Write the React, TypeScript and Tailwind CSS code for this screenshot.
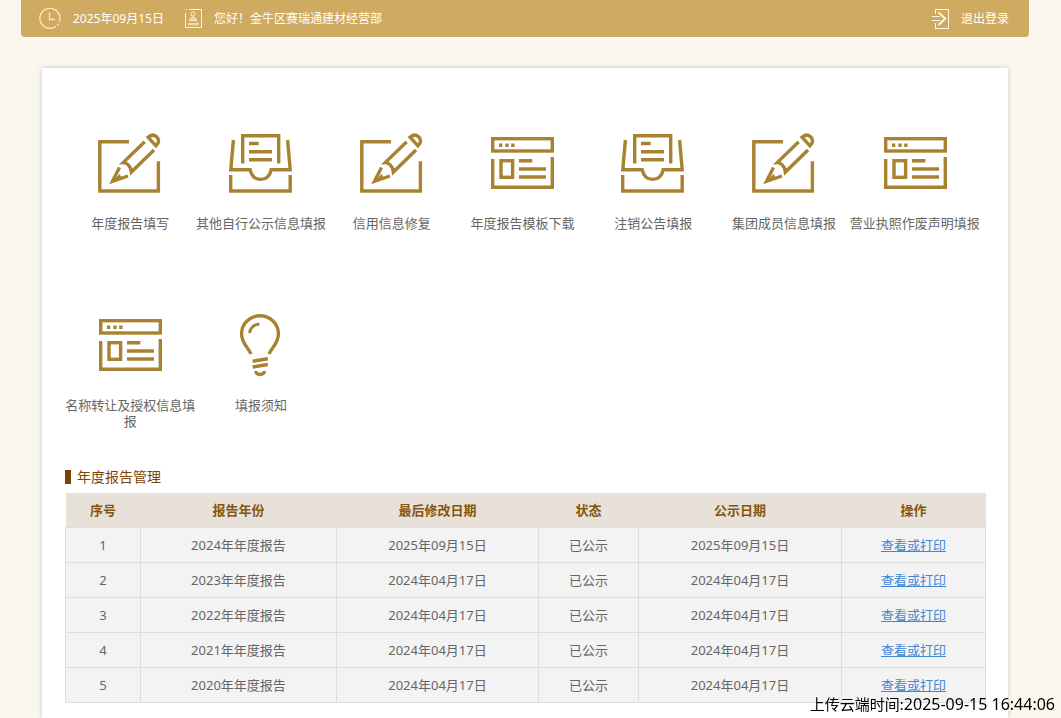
import type { ComponentType } from "react";

function ClockIcon() {
  return (
    <svg className="w-[22px] h-[22px] shrink-0" viewBox="0 0 22 22" fill="none" stroke="#fbe9c6" strokeWidth={1.3}>
      <path d="M17 18.2A10 10 0 1 1 20.2 14" />
      <path d="M18.2 17.2a10 10 0 0 0 1.2-1.6" />
      <path d="M10.5 4.5v7H16" />
    </svg>
  );
}

function BadgeIcon() {
  return (
    <svg className="w-[17px] h-[19px] shrink-0" viewBox="0 0 17 19" fill="none" stroke="#fdf0d6">
      <path d="M.5 4V18.5H16.5V.5H4M.5 .5H2" />
      <circle cx="8" cy="5" r="2.1" />
      <path d="M4.7 11.5C4.7 9 6 8.2 8 8.2s3.4 .8 3.4 3.3z" fill="#e8cf9f" />
      <path d="M3 15h11" strokeWidth={2.6} stroke="#efdab0" />
    </svg>
  );
}

function LogoutIcon() {
  return (
    <svg className="w-[17px] h-[20px] shrink-0" viewBox="0 0 17 20" fill="none" stroke="#fff8e8">
      <path d="M3.5 5V.5H16.5V19.5H3.5V14" />
      <path d="M0 7.5h8M0 11.5h8" />
      <path d="M6.5 3.5l6.8 6L6.5 16" strokeWidth={1.8} />
    </svg>
  );
}

function EditIcon() {
  return (
    <svg className="w-16 h-16" viewBox="0 0 64 64" fill="none" stroke="#a98231" strokeWidth={3.4}>
      <path d="M31 9.8H1.8V59H60.4V29.3" />
      <path d="M46.7 9.8L25.2 30.6C29 30.5 32.8 34.5 33.4 40L56 18" />
      <path d="M21.5 35.5L14.5 49.3L30 44" />
      <path d="M21.5 42L13.2 51L24.5 47Z" fill="#a98231" stroke="none" />
      <path d="M50 5.2L58 13.8C61.2 11 61.3 7.6 58.8 5C56.2 2.6 53 2.6 50 5.2Z" />
    </svg>
  );
}

function TrayIcon() {
  return (
    <svg className="w-16 h-16" viewBox="0 0 64 64" fill="none" stroke="#a98231" strokeWidth={3.4}>
      <path d="M13.7 31.5V3.8H49.7V31.5" />
      <path d="M20 11.5H29.7M20 19.7H43M20 27.7H43" />
      <path d="M4.4 8L1.8 37.8H21.2C22.6 44 26 47.4 31.7 47.4S40.8 44 42.2 37.8H61.2L58.6 8" />
      <path d="M1.7 43V59H61.2V43" />
    </svg>
  );
}

function WindowIcon() {
  return (
    <svg className="w-16 h-16" viewBox="0 0 64 64" fill="none" stroke="#a98231" strokeWidth={3.4}>
      <rect x="2.7" y="6.7" width="59.6" height="12.3" />
      <path d="M9 13.3h3.3M15.4 13.3h3.3M21.2 13.3h3.3" />
      <path d="M2.7 27V55.3H62.3V25" />
      <rect x="11" y="28.7" width="11.6" height="16.6" />
      <path d="M29 28.7H42.3M29 37H56M29 45H56" />
    </svg>
  );
}

function BulbIcon() {
  return (
    <svg className="w-16 h-16" viewBox="0 0 64 64" fill="none" stroke="#a98231" strokeWidth={3.4}>
      <path d="M22 40C19.5 33.5 12.6 30 12.6 19.8A18.4 18 0 0 1 49.4 19.8C49.4 30 42.5 33.5 40 40" />
      <path d="M20.5 19C21 14 25 10.3 30.5 10" strokeWidth={3} />
      <path d="M23.6 47.2L38.8 44.8M23.6 53L38.8 50.5" />
      <path d="M26.8 57C27 60 29 60.5 31 60.5S35.2 60 35.4 57" />
    </svg>
  );
}

const menus: { label: string; icon: ComponentType }[] = [
  { label: "年度报告填写", icon: EditIcon },
  { label: "其他自行公示信息填报", icon: TrayIcon },
  { label: "信用信息修复", icon: EditIcon },
  { label: "年度报告模板下载", icon: WindowIcon },
  { label: "注销公告填报", icon: TrayIcon },
  { label: "集团成员信息填报", icon: EditIcon },
  { label: "营业执照作废声明填报", icon: WindowIcon },
  { label: "名称转让及授权信息填报", icon: WindowIcon },
  { label: "填报须知", icon: BulbIcon },
];

const columns = [
  { title: "序号", width: "w-[75px]" },
  { title: "报告年份", width: "w-[196px]" },
  { title: "最后修改日期", width: "w-[202px]" },
  { title: "状态", width: "w-[100px]" },
  { title: "公示日期", width: "w-[203px]" },
  { title: "操作", width: "w-[144px]" },
];

const reports = [
  { year: 2024, modified: "2025年09月15日", published: "2025年09月15日" },
  { year: 2023, modified: "2024年04月17日", published: "2024年04月17日" },
  { year: 2022, modified: "2024年04月17日", published: "2024年04月17日" },
  { year: 2021, modified: "2024年04月17日", published: "2024年04月17日" },
  { year: 2020, modified: "2024年04月17日", published: "2024年04月17日" },
];

const cell = "border border-[#dedede] p-0 text-center";

export default function App() {
  return (
    <div className="min-h-screen flex flex-col pr-[11px] bg-[#faf7ee] font-['Noto_Sans','Noto_Sans_CJK_SC',sans-serif] text-[13px] leading-4 text-[#666]">
      <div className="w-[96%] mx-auto flex-1 flex flex-col">
        {/* Top bar */}
        <header className="h-[37px] shrink-0 flex items-center justify-between pl-[18px] pr-5 bg-[#cfaa61] rounded-b text-xs text-white">
          <div className="flex items-center gap-[21px]">
            <div className="flex items-center gap-3">
              <ClockIcon />
              <span>2025年09月15日</span>
            </div>
            <div className="flex items-center gap-3">
              <BadgeIcon />
              <span>您好！金牛区赛瑞通建材经营部</span>
            </div>
          </div>
          <a href="#logout" className="flex items-center gap-3">
            <LogoutIcon />
            退出登录
          </a>
        </header>

        <main className="flex-1 mt-[31px] mx-[21px] px-[23px] pt-16 bg-white shadow-[0_0_5px_rgba(0,0,0,0.2)]">
          {/* Menu */}
          <nav className="grid grid-cols-7 gap-y-[83px] pr-[5px]">
            {menus.map(({ label, icon: Icon }) => (
              <a key={label} href="#menu" className="flex flex-col items-center gap-[19px] text-center">
                <Icon />
                <span>{label}</span>
              </a>
            ))}
          </nav>

          {/* Annual reports */}
          <h2 className="flex items-center gap-1.5 mt-10 mb-2 text-sm leading-4 text-[#7b4406]">
            <span className="w-1.5 h-3.5 bg-[#7b4406]" />
            年度报告管理
          </h2>
          <table className="w-full table-fixed border-collapse">
            <thead>
              <tr className="h-[34px] bg-[#e8e1da] text-[#84560f]">
                {columns.map((c) => (
                  <th key={c.title} className={`${c.width} p-0 font-bold`}>
                    {c.title}
                  </th>
                ))}
              </tr>
            </thead>
            <tbody>
              {reports.map((r, i) => (
                <tr key={r.year} className="h-[35px] bg-[#f3f3f3]">
                  <td className={cell}>{i + 1}</td>
                  <td className={cell}>{r.year}年年度报告</td>
                  <td className={cell}>{r.modified}</td>
                  <td className={cell}>已公示</td>
                  <td className={cell}>{r.published}</td>
                  <td className={cell}>
                    <a href="#report" className="text-[#4187d3] underline">
                      查看或打印
                    </a>
                  </td>
                </tr>
              ))}
            </tbody>
          </table>
        </main>
      </div>

      {/* Upload timestamp */}
      <div className="fixed right-1.5 bottom-1 text-[15px] leading-5 text-black">
        上传云端时间:<span className="text-base leading-5">2025-09-15 16:44:06</span>
      </div>
    </div>
  );
}
